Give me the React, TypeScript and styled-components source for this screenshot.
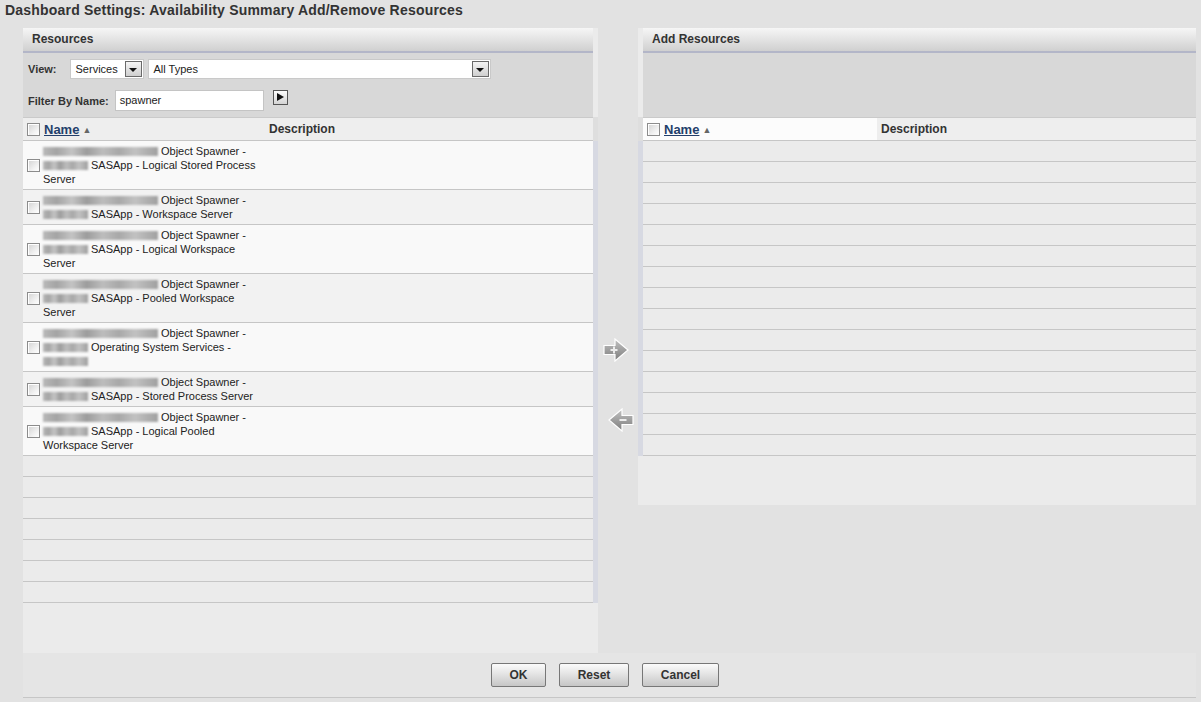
import React from "react";
import styled, { createGlobalStyle } from "styled-components";

const Global = createGlobalStyle`
  html, body { margin: 0; padding: 0; background: #e2e2e2; }
  body { font-family: "Liberation Sans", Arial, sans-serif; color: #333; }
  * { box-sizing: border-box; }
`;

const Page = styled.div`
  width: 1201px;
  height: 702px;
  overflow: hidden;
  background: #e2e2e2;
`;

const Title = styled.div`
  height: 28px;
  padding: 2px 0 0 5px;
  font-size: 14px;
  font-weight: bold;
  letter-spacing: 0.2px;
  color: #333;
  line-height: 17px;
`;

const Main = styled.div`
  margin-left: 23px;
  width: 1173px;
`;

const Columns = styled.div`
  display: flex;
  align-items: flex-start;
  height: 625px;
`;

const Panel = styled.div<{ $w: number; $h: number }>`
  width: ${(p) => p.$w}px;
  height: ${(p) => p.$h}px;
  background: #ebebeb;
  display: flex;
  flex-direction: column;
`;

const PanelHeader = styled.div<{ $side: "left" | "right" }>`
  height: 25px;
  ${(p) => (p.$side === "left" ? "margin-right: 5px;" : "margin-left: 5px;")}
  background: linear-gradient(#f6f6f6, #d0d0d0);
  border-bottom: 2px solid #b3b6c8;
  padding-left: 9px;
  font-size: 12px;
  font-weight: bold;
  line-height: 23px;
  color: #333;
`;

const Toolbar = styled.div<{ $side: "left" | "right" }>`
  height: 64px;
  ${(p) => (p.$side === "left" ? "margin-right: 5px;" : "margin-left: 5px;")}
  background: #d8d8d8;
  padding: 5px 0 0 5px;
  display: flex;
  flex-direction: column;
  gap: 11px;
`;

const ToolRow = styled.div`
  display: flex;
  align-items: center;
  height: 21px;
`;

const Label = styled.span<{ $gap: number }>`
  font-size: 11px;
  font-weight: bold;
  color: #333;
  margin-right: ${(p) => p.$gap}px;
`;

const Select = styled.div<{ $w: number }>`
  width: ${(p) => p.$w}px;
  height: 20px;
  background: #fff;
  border: 1px solid #c9c9c9;
  display: flex;
  align-items: center;
  justify-content: space-between;
  padding: 0 1px 0 5px;
  font-size: 11px;
  color: #222;
  margin-right: 4px;
`;

const DropBtn = styled.span`
  width: 17px;
  height: 16px;
  border: 1px solid #6a6a6a;
  background: linear-gradient(#f4f4f4, #cfcfcf);
  display: flex;
  align-items: center;
  justify-content: center;
  padding-top: 3px;
  &::after {
    content: "";
    border-left: 4px solid transparent;
    border-right: 4px solid transparent;
    border-top: 4px solid #111;
  }
`;

const Input = styled.div`
  width: 149px;
  height: 21px;
  background: #fff;
  border: 1px solid #c4c4c4;
  padding-left: 4px;
  font-size: 11px;
  line-height: 19px;
  color: #222;
`;

const PlayBtn = styled.span`
  width: 15px;
  height: 15px;
  margin: -7px 0 0 9px;
  border: 1px solid #555;
  background: linear-gradient(#fdfdfd, #d4d4d4);
  display: flex;
  align-items: center;
  justify-content: center;
  padding-left: 1px;
  &::after {
    content: "";
    border-top: 4.5px solid transparent;
    border-bottom: 4.5px solid transparent;
    border-left: 7px solid #111;
  }
`;

const TableArea = styled.div`
  display: flex;
`;

const Table = styled.div`
  flex: 1;
  display: flex;
  flex-direction: column;
`;

const Gutter = styled.div`
  width: 5px;
  background: linear-gradient(#dedede 0 24px, #d7d9e2 24px);
`;

const HeadRow = styled.div<{ $nameW: number }>`
  display: grid;
  grid-template-columns: ${(p) => p.$nameW}px 1fr;
  height: 24px;
  border-top: 1px solid #cacaca;
  border-bottom: 1px solid #c6c6c6;
`;

const HeadCell = styled.div<{ $bg: string }>`
  background: ${(p) => p.$bg};
  display: flex;
  align-items: center;
  padding-left: 4px;
  font-size: 12px;
  font-weight: bold;
  color: #333;
`;

const SortLink = styled.a`
  font-size: 13px;
  font-weight: bold;
  color: #233f6b;
  text-decoration: underline;
  margin-left: 4px;
  cursor: pointer;
`;

const SortArrow = styled.span`
  font-size: 9px;
  color: #666;
  margin-left: 3px;
  padding-top: 1px;
`;

const Check = styled.span`
  width: 13px;
  height: 13px;
  flex: none;
  border: 1px solid #8c8c8c;
  background: linear-gradient(135deg, #d2d2d2, #f4f4f4 70%, #fff);
  box-shadow: inset 1px 1px 0 #fff;
`;

const DataRow = styled.div<{ $alt: boolean }>`
  display: grid;
  grid-template-columns: 20px 222px 1fr;
  align-items: center;
  padding: 3px 0;
  background: ${(p) => (p.$alt ? "#f2f2f2" : "#f9f9f9")};
  border-bottom: 1px solid #c6c6c6;
`;

const CheckCell = styled.div`
  padding-left: 4px;
  display: flex;
`;

const NameText = styled.div`
  font-size: 11px;
  line-height: 14px;
  color: #222;
  white-space: nowrap;
`;

const Blur = styled.span<{ $w: number }>`
  display: inline-block;
  width: ${(p) => p.$w}px;
  height: 9px;
  vertical-align: -1px;
  margin-right: 3px;
  background: linear-gradient(
    90deg,
    #b9b9b9 0%,
    #a4a4a4 12%,
    #c4c4c4 25%,
    #9c9c9c 38%,
    #bdbdbd 52%,
    #a8a8a8 66%,
    #c2c2c2 80%,
    #a0a0a0 100%
  );
  filter: blur(0.9px);
`;

const EmptyRow = styled.div`
  height: 21px;
  background: #ebebeb;
  border-bottom: 1px solid #c6c6c6;
`;

const Middle = styled.div`
  width: 40px;
  padding-top: 310px;
  display: flex;
  flex-direction: column;
  gap: 46px;
`;

const ArrowWrap = styled.div<{ $ml: number }>`
  margin-left: ${(p) => p.$ml}px;
  width: 26px;
  height: 24px;
`;

const ButtonBar = styled.div`
  height: 45px;
  background: #e5e5e5;
  border-bottom: 1px solid #c6c6c6;
  display: flex;
  justify-content: center;
  padding: 10px 9px 0 0;
  gap: 13px;
`;

const Button = styled.button<{ $w: number }>`
  width: ${(p) => p.$w}px;
  height: 24px;
  border: 1px solid #777;
  border-radius: 2px;
  background: linear-gradient(#fbfbfb, #e4e4e4 45%, #c6c6c6);
  font-family: "Liberation Sans", Arial, sans-serif;
  font-size: 12px;
  font-weight: bold;
  color: #333;
  padding: 0;
  cursor: pointer;
`;

const ArrowIcon = ({ dir }: { dir: "add" | "remove" }) => {
  const id = dir === "add" ? "ga" : "gr";
  const path =
    dir === "add"
      ? "M1 7.5 H12 V1 L25 12 L12 23 V16.5 H1 Z"
      : "M25 7.5 H14 V1 L1 12 L14 23 V16.5 H25 Z";
  return (
    <svg width="26" height="24" viewBox="0 0 26 24">
      <defs>
        <linearGradient id={id} x1="0" y1="0" x2="0" y2="1">
          <stop offset="0" stopColor="#c2c2c2" />
          <stop offset="1" stopColor="#7c7c7c" />
        </linearGradient>
      </defs>
      <path d={path} fill={`url(#${id})`} stroke="#fff" strokeWidth="1.2" strokeLinejoin="miter" />
      {dir === "add" ? (
        <path d="M7.5 12 H14.5 M11 8.5 V15.5" stroke="#ececec" strokeWidth="2" />
      ) : (
        <path d="M11.5 12 H18.5" stroke="#ececec" strokeWidth="2" />
      )}
    </svg>
  );
};

type Item = { lines: { blur?: number; text: string }[] };

const items: Item[] = [
  { lines: [{ blur: 115, text: "Object Spawner -" }, { blur: 45, text: "SASApp - Logical Stored Process" }, { text: "Server" }] },
  { lines: [{ blur: 115, text: "Object Spawner -" }, { blur: 45, text: "SASApp - Workspace Server" }] },
  { lines: [{ blur: 115, text: "Object Spawner -" }, { blur: 45, text: "SASApp - Logical Workspace" }, { text: "Server" }] },
  { lines: [{ blur: 115, text: "Object Spawner -" }, { blur: 45, text: "SASApp - Pooled Workspace" }, { text: "Server" }] },
  { lines: [{ blur: 115, text: "Object Spawner -" }, { blur: 45, text: "Operating System Services -" }, { blur: 45, text: "" }] },
  { lines: [{ blur: 115, text: "Object Spawner -" }, { blur: 45, text: "SASApp - Stored Process Server" }] },
  { lines: [{ blur: 115, text: "Object Spawner -" }, { blur: 45, text: "SASApp - Logical Pooled" }, { text: "Workspace Server" }] },
];

export default function App() {
  return (
    <Page>
      <Global />
      <Title>Dashboard Settings: Availability Summary Add/Remove Resources</Title>
      <Main>
        <Columns>
          <Panel $w={575} $h={625}>
            <PanelHeader $side="left">Resources</PanelHeader>
            <Toolbar $side="left">
              <ToolRow>
                <Label $gap={13}>View:</Label>
                <Select $w={74}>
                  Services
                  <DropBtn />
                </Select>
                <Select $w={343}>
                  All Types
                  <DropBtn />
                </Select>
              </ToolRow>
              <ToolRow>
                <Label $gap={6}>Filter By Name:</Label>
                <Input>spawner</Input>
                <PlayBtn />
              </ToolRow>
            </Toolbar>
            <TableArea>
              <Table>
                <HeadRow $nameW={242}>
                  <HeadCell $bg="#eeeeee">
                    <Check />
                    <SortLink>Name</SortLink>
                    <SortArrow>▲</SortArrow>
                  </HeadCell>
                  <HeadCell $bg="#eeeeee">Description</HeadCell>
                </HeadRow>
                {items.map((it, i) => (
                  <DataRow key={i} $alt={i % 2 === 1}>
                    <CheckCell>
                      <Check />
                    </CheckCell>
                    <NameText>
                      {it.lines.map((l, j) => (
                        <div key={j}>
                          {l.blur ? <Blur $w={l.blur} /> : null}
                          {l.text}
                        </div>
                      ))}
                    </NameText>
                    <div />
                  </DataRow>
                ))}
                {Array.from({ length: 7 }).map((_, i) => (
                  <EmptyRow key={i} />
                ))}
              </Table>
              <Gutter />
            </TableArea>
          </Panel>
          <Middle>
            <ArrowWrap $ml={5}>
              <ArrowIcon dir="add" />
            </ArrowWrap>
            <ArrowWrap $ml={10}>
              <ArrowIcon dir="remove" />
            </ArrowWrap>
          </Middle>
          <Panel $w={558} $h={477}>
            <PanelHeader $side="right">Add Resources</PanelHeader>
            <Toolbar $side="right" />
            <TableArea>
              <Gutter />
              <Table>
                <HeadRow $nameW={234}>
                  <HeadCell $bg="#fcfcfc">
                    <Check />
                    <SortLink>Name</SortLink>
                    <SortArrow>▲</SortArrow>
                  </HeadCell>
                  <HeadCell $bg="#eeeeee">Description</HeadCell>
                </HeadRow>
                {Array.from({ length: 15 }).map((_, i) => (
                  <EmptyRow key={i} />
                ))}
              </Table>
            </TableArea>
          </Panel>
        </Columns>
        <ButtonBar>
          <Button $w={55}>OK</Button>
          <Button $w={70}>Reset</Button>
          <Button $w={77}>Cancel</Button>
        </ButtonBar>
      </Main>
    </Page>
  );
}
